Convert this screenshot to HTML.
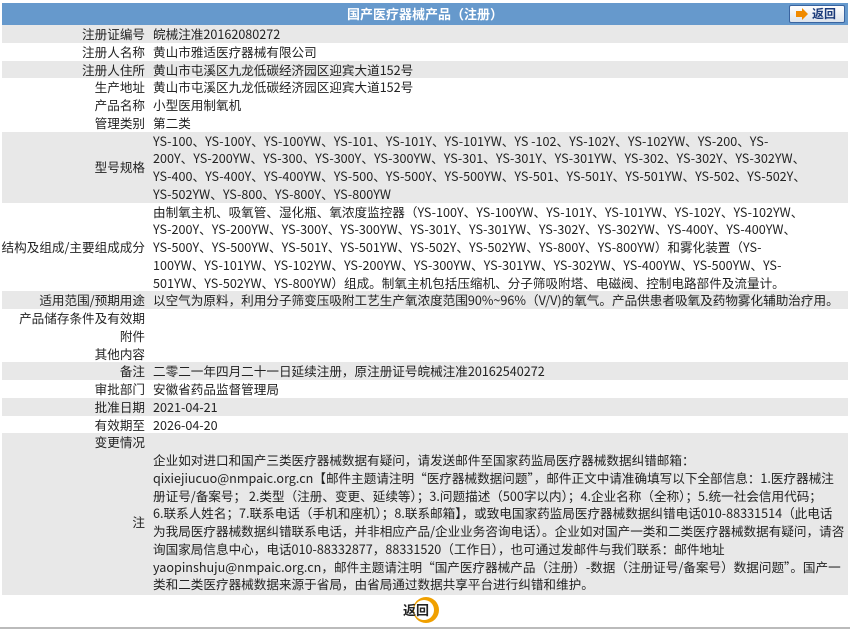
<!DOCTYPE html>
<html><head><meta charset="utf-8"><style>
*{margin:0;padding:0;box-sizing:border-box}
body{width:850px;height:629px;background:#fff;font-family:"Noto Sans CJK SC","Liberation Sans",sans-serif;font-size:12.6px;color:#222;position:relative;overflow:hidden}
.hd{position:absolute;left:2px;top:3px;width:846px;height:22px;background:#6699cc;color:#fff;font-weight:bold;text-align:center;line-height:22px;font-size:13px}
.btn{position:absolute;right:3px;top:2px;width:56px;height:18px;border:1px solid #3a64a0;border-radius:2px;background:linear-gradient(#fff,#dde3ec);color:#1a3a7a;font-size:12px;line-height:16px;text-align:left;padding-left:22px}
.btn:before{content:"";position:absolute;left:6px;top:5px;width:6px;height:6px;background:#f08a00}
.btn:after{content:"";position:absolute;left:12px;top:2px;border-left:6px solid #f08a00;border-top:6px solid transparent;border-bottom:6px solid transparent}
.tb{position:absolute;left:2px;top:25px;width:846px}
.r{display:flex;line-height:17.75px}
.g{background:#e8e8e8}
.l{width:147px;text-align:right;padding-right:4px;flex:none;display:flex;align-items:center;justify-content:flex-end;white-space:nowrap}
.v{padding-left:4px;white-space:nowrap}
.foot{position:absolute;left:0;top:627px;width:850px;height:2px;background:#bbb}
.back{position:absolute;left:403px;top:601px;font-weight:bold;font-size:13px;color:#222;line-height:18px}
.ring{position:absolute;left:413px;top:597px;width:26px;height:26px;border-radius:50%;background:#f0a000}
.ring i{position:absolute;left:1px;top:3px;width:20px;height:20px;border-radius:50%;background:#fff}
</style></head><body>
<div class="hd">国产医疗器械产品（注册）<div class="btn">返回</div></div>
<div class="tb">
<div class="r g"><div class="l">注册证编号</div><div class="v">皖械注准20162080272</div></div>
<div class="r"><div class="l">注册人名称</div><div class="v">黄山市雅适医疗器械有限公司</div></div>
<div class="r g"><div class="l">注册人住所</div><div class="v">黄山市屯溪区九龙低碳经济园区迎宾大道152号</div></div>
<div class="r"><div class="l">生产地址</div><div class="v">黄山市屯溪区九龙低碳经济园区迎宾大道152号</div></div>
<div class="r"><div class="l">产品名称</div><div class="v">小型医用制氧机</div></div>
<div class="r"><div class="l">管理类别</div><div class="v">第二类</div></div>
<div class="r g"><div class="l">型号规格</div><div class="v">YS-100、YS-100Y、YS-100YW、YS-101、YS-101Y、YS-101YW、YS -102、YS-102Y、YS-102YW、YS-200、YS-<br>200Y、YS-200YW、YS-300、YS-300Y、YS-300YW、YS-301、YS-301Y、YS-301YW、YS-302、YS-302Y、YS-302YW、<br>YS-400、YS-400Y、YS-400YW、YS-500、YS-500Y、YS-500YW、YS-501、YS-501Y、YS-501YW、YS-502、YS-502Y、<br>YS-502YW、YS-800、YS-800Y、YS-800YW</div></div>
<div class="r"><div class="l">结构及组成/主要组成成分</div><div class="v">由制氧主机、吸氧管、湿化瓶、氧浓度监控器（YS-100Y、YS-100YW、YS-101Y、YS-101YW、YS-102Y、YS-102YW、<br>YS-200Y、YS-200YW、YS-300Y、YS-300YW、YS-301Y、YS-301YW、YS-302Y、YS-302YW、YS-400Y、YS-400YW、<br>YS-500Y、YS-500YW、YS-501Y、YS-501YW、YS-502Y、YS-502YW、YS-800Y、YS-800YW）和雾化装置（YS-<br>100YW、YS-101YW、YS-102YW、YS-200YW、YS-300YW、YS-301YW、YS-302YW、YS-400YW、YS-500YW、YS-<br>501YW、YS-502YW、YS-800YW）组成。制氧主机包括压缩机、分子筛吸附塔、电磁阀、控制电路部件及流量计。</div></div>
<div class="r g"><div class="l">适用范围/预期用途</div><div class="v">以空气为原料，利用分子筛变压吸附工艺生产氧浓度范围90%~96%（V/V)的氧气。产品供患者吸氧及药物雾化辅助治疗用。</div></div>
<div class="r"><div class="l">产品储存条件及有效期</div><div class="v"></div></div>
<div class="r"><div class="l">附件</div><div class="v"></div></div>
<div class="r"><div class="l">其他内容</div><div class="v"></div></div>
<div class="r g"><div class="l">备注</div><div class="v">二零二一年四月二十一日延续注册，原注册证号皖械注准20162540272</div></div>
<div class="r"><div class="l">审批部门</div><div class="v">安徽省药品监督管理局</div></div>
<div class="r g"><div class="l">批准日期</div><div class="v">2021-04-21</div></div>
<div class="r"><div class="l">有效期至</div><div class="v">2026-04-20</div></div>
<div class="r g"><div class="l">变更情况</div><div class="v"></div></div>
<div class="r g" style="padding-bottom:2px"><div class="l">注</div><div class="v">企业如对进口和国产三类医疗器械数据有疑问，请发送邮件至国家药监局医疗器械数据纠错邮箱：<br>qixiejiucuo@nmpaic.org.cn【邮件主题请注明“医疗器械数据问题”，邮件正文中请准确填写以下全部信息：1.医疗器械注<br>册证号/备案号； 2.类型（注册、变更、延续等）；3.问题描述（500字以内）；4.企业名称（全称）；5.统一社会信用代码；<br>6.联系人姓名；7.联系电话（手机和座机）；8.联系邮箱】，或致电国家药监局医疗器械数据纠错电话010-88331514（此电话<br>为我局医疗器械数据纠错联系电话，并非相应产品/企业业务咨询电话）。企业如对国产一类和二类医疗器械数据有疑问，请咨<br>询国家局信息中心，电话010-88332877，88331520（工作日），也可通过发邮件与我们联系：邮件地址<br>yaopinshuju@nmpaic.org.cn，邮件主题请注明“国产医疗器械产品（注册）-数据（注册证号/备案号）数据问题”。国产一<br>类和二类医疗器械数据来源于省局，由省局通过数据共享平台进行纠错和维护。</div></div>
</div>
<div class="ring"><i></i></div>
<div class="back">返回</div>
<div class="foot"></div>
</body></html>
